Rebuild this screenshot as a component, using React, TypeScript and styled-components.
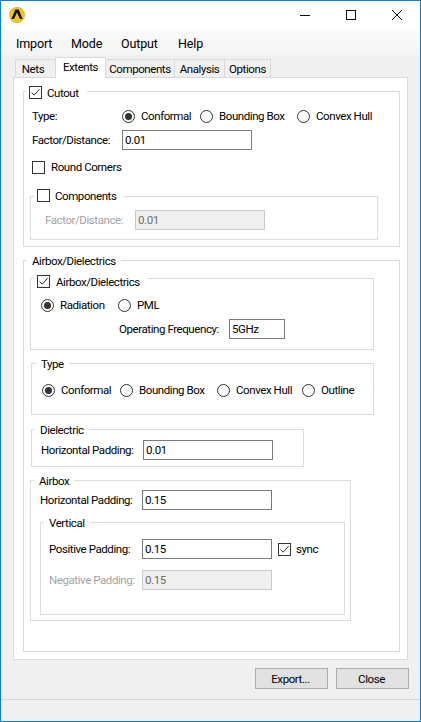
import React from "react";
import styled, { createGlobalStyle } from "styled-components";

const Global = createGlobalStyle`
  html, body { margin: 0; padding: 0; background: #f0f0f0; }
  * { box-sizing: border-box; }
  body { font-family: Roboto, "Liberation Sans", sans-serif; font-size: 11.5px; letter-spacing: -0.42px; color: #000; }
`;

const Window = styled.div`
  width: 421px;
  height: 722px;
  border: 1px solid #0f7fd8;
  background: #f0f0f0;
  display: flex;
  flex-direction: column;
  overflow: hidden;
`;
const TitleBar = styled.div`
  height: 30px;
  flex: none;
  background: #fff;
  display: flex;
  align-items: flex-start;
  padding: 6px 0 0 8px;
`;
const WindowControls = styled.div`
  margin: -6px 0 0 auto;
  display: flex;
`;
const ControlButton = styled.div`
  width: 46px;
  height: 28px;
  display: flex;
  align-items: center;
  justify-content: center;
`;
const MenuBar = styled.div`
  height: 24px;
  flex: none;
  background: linear-gradient(#fafafa, #f4f4f4);
  display: flex;
  align-items: center;
  padding-left: 15px;
`;
const MenuItem = styled.span<{ $w: number }>`
  width: ${(p) => p.$w}px;
  font-size: 12.5px;
  letter-spacing: -0.15px;
`;
const TabStrip = styled.div`
  height: 22px;
  flex: none;
  display: flex;
  align-items: flex-end;
  padding-left: 15px;
  position: relative;
  z-index: 1;
`;
const Tab = styled.div<{ $w: number; $active?: boolean; $pr?: number }>`
  width: ${(p) => p.$w}px;
  height: ${(p) => (p.$active ? 21 : 18)}px;
  margin-bottom: ${(p) => (p.$active ? -1 : 0)}px;
  background: ${(p) => (p.$active ? "#fff" : "#f0f0f0")};
  border: 1px solid #d9d9d9;
  border-bottom: none;
  margin-left: -1px;
  display: flex;
  align-items: center;
  justify-content: center;
  padding-bottom: ${(p) => (p.$active ? 2 : 0)}px;
  padding-right: ${(p) => p.$pr ?? 0}px;
  position: relative;
  z-index: ${(p) => (p.$active ? 2 : 1)};
`;
const Pane = styled.div`
  margin-left: 12px;
  width: 395px;
  height: 583px;
  flex: none;
  background: #fff;
  border: 1px solid #d9d9d9;
  padding-left: 9px;
`;
const Group = styled.div<{ $x?: number; $y: number; $w: number; $h: number }>`
  position: relative;
  margin-left: ${(p) => p.$x ?? 0}px;
  margin-top: ${(p) => p.$y}px;
  width: ${(p) => p.$w}px;
  height: ${(p) => p.$h}px;
  border: 1px solid #dcdcdc;
  flex: none;
`;
const Legend = styled.div<{ $x: number; $top?: number; $check?: boolean; $gap?: number }>`
  position: absolute;
  left: ${(p) => p.$x}px;
  top: ${(p) => p.$top ?? -8}px;
  height: 15px;
  padding: ${(p) => (p.$check ? "0 8px 0 3px" : "0 5px")};
  background: #fff;
  display: flex;
  align-items: center;
  gap: ${(p) => p.$gap ?? 5}px;
  white-space: nowrap;
`;
const Row = styled.div<{ $x: number; $y: number }>`
  display: flex;
  align-items: center;
  height: 20px;
  margin-left: ${(p) => p.$x}px;
  margin-top: ${(p) => p.$y}px;
  white-space: nowrap;
`;
const Label = styled.span<{ $w?: number; $disabled?: boolean }>`
  width: ${(p) => (p.$w ? `${p.$w}px` : "auto")};
  flex: none;
  color: ${(p) => (p.$disabled ? "#a3a3a3" : "#000")};
`;
const Field = styled.input<{ $w?: number }>`
  width: ${(p) => p.$w ?? 130}px;
  height: 20px;
  flex: none;
  border: 1px solid #7a7a7a;
  background: #fff;
  padding: 0 2px 1px;
  margin: 0;
  font: inherit;
  letter-spacing: inherit;
  color: #000;
  outline: none;
  &:disabled {
    background: #f0f0f0;
    border-color: #c9c9c9;
    color: #6d6d6d;
  }
`;
const RadioOption = styled.div<{ $w?: number }>`
  width: ${(p) => (p.$w ? `${p.$w}px` : "auto")};
  flex: none;
  display: flex;
  align-items: center;
  gap: 6px;
`;
const RadioCircle = styled.span<{ $on?: boolean }>`
  width: 13px;
  height: 13px;
  flex: none;
  border: 1px solid #333;
  border-radius: 50%;
  background: #fff;
  display: flex;
  align-items: center;
  justify-content: center;
  &::after {
    content: "";
    width: 7px;
    height: 7px;
    border-radius: 50%;
    background: ${(p) => (p.$on ? "#333" : "transparent")};
  }
`;
const CheckSquare = styled.span`
  width: 13px;
  height: 13px;
  flex: none;
  border: 1px solid #333;
  background: #fff;
  display: flex;
  align-items: center;
  justify-content: center;
`;
const CheckOption = styled.div<{ $gap?: number; $x?: number }>`
  display: flex;
  align-items: center;
  gap: ${(p) => p.$gap ?? 6}px;
  margin-left: ${(p) => p.$x ?? 0}px;
`;
const Footer = styled.div`
  height: 39px;
  flex: none;
  display: flex;
  justify-content: flex-end;
  align-items: flex-start;
  gap: 8px;
  padding: 8px 11px 0 0;
`;
const Button = styled.button`
  width: 73px;
  height: 21px;
  margin: 0;
  padding: 0 2px 0 0;
  border: 1px solid #adadad;
  background: #e1e1e1;
  font: inherit;
  letter-spacing: inherit;
  color: #000;
`;
const StatusBar = styled.div`
  flex: 1;
  border-top: 1px solid #d7d7d7;
`;

const Radio = ({ label, on, w }: { label: string; on?: boolean; w?: number }) => (
  <RadioOption $w={w}>
    <RadioCircle $on={on} />
    <span>{label}</span>
  </RadioOption>
);

const Box = ({ on }: { on?: boolean }) => (
  <CheckSquare>
    {on && (
      <svg width="11" height="11" viewBox="0 0 11 11">
        <path d="M1.5 5.5 L4.2 8.2 L9.6 2.2" fill="none" stroke="#333" strokeWidth="1" />
      </svg>
    )}
  </CheckSquare>
);

const Logo = () => (
  <svg width="16" height="16" viewBox="0 0 16 16">
    <circle cx="8" cy="8" r="7.7" fill="#f2c521" stroke="#b99a1c" strokeWidth="0.5" />
    <path d="M2.4 12 L6.3 2.6 H9.7 L13.6 12 H10.9 L8 5.6 L5.1 12 Z" fill="#111" />
  </svg>
);

const App = () => (
  <Window>
    <Global />
    <TitleBar>
      <Logo />
      <WindowControls>
        <ControlButton>
          <svg width="10" height="10" viewBox="0 0 10 10">
            <path d="M0 5.5 H10" stroke="#111" />
          </svg>
        </ControlButton>
        <ControlButton>
          <svg width="10" height="10" viewBox="0 0 10 10">
            <rect x="0.5" y="0.5" width="9" height="9" fill="none" stroke="#111" />
          </svg>
        </ControlButton>
        <ControlButton>
          <svg width="10" height="10" viewBox="0 0 10 10">
            <path d="M0 0 L10 10 M10 0 L0 10" stroke="#111" />
          </svg>
        </ControlButton>
      </WindowControls>
    </TitleBar>
    <MenuBar>
      <MenuItem $w={55}>Import</MenuItem>
      <MenuItem $w={50}>Mode</MenuItem>
      <MenuItem $w={57}>Output</MenuItem>
      <MenuItem $w={40}>Help</MenuItem>
    </MenuBar>
    <TabStrip>
      <Tab $w={41} $pr={5}>Nets</Tab>
      <Tab $w={51} $active>Extents</Tab>
      <Tab $w={70}>Components</Tab>
      <Tab $w={51}>Analysis</Tab>
      <Tab $w={47}>Options</Tab>
    </TabStrip>
    <Pane>
      <Group $y={13} $w={377} $h={156}>
        <Legend $x={2} $top={-7} $check>
          <Box on />
          <span>Cutout</span>
        </Legend>
        <Row $x={8} $y={14}>
          <Label $w={90}>Type:</Label>
          <Radio label="Conformal" on w={78} />
          <Radio label="Bounding Box" w={97} />
          <Radio label="Convex Hull" />
        </Row>
        <Row $x={8} $y={4}>
          <Label $w={90}>Factor/Distance:</Label>
          <Field defaultValue="0.01" />
        </Row>
        <Row $x={8} $y={7}>
          <CheckOption>
            <Box />
            <span>Round Corners</span>
          </CheckOption>
        </Row>
        <Group $x={6} $y={19} $w={348} $h={44}>
          <Legend $x={3} $top={-9} $check>
            <Box />
            <span>Components</span>
          </Legend>
          <Row $x={14} $y={13}>
            <Label $w={90} $disabled>Factor/Distance:</Label>
            <Field disabled defaultValue="0.01" />
          </Row>
        </Group>
      </Group>
      <Group $y={13} $w={377} $h={392}>
        <Legend $x={3}>
          <span>Airbox/Dielectrics</span>
        </Legend>
        <Group $x={6} $y={17} $w={344} $h={72}>
          <Legend $x={3} $top={-5} $check $gap={6}>
            <Box on />
            <span>Airbox/Dielectrics</span>
          </Legend>
          <Row $x={10} $y={16}>
            <Radio label="Radiation" on w={77} />
            <Radio label="PML" />
          </Row>
          <Row $x={88} $y={4}>
            <Label $w={110}>Operating Frequency:</Label>
            <Field $w={56} defaultValue="5GHz" />
          </Row>
        </Group>
        <Group $x={7} $y={13} $w={343} $h={52}>
          <Legend $x={4}>
            <span>Type</span>
          </Legend>
          <Row $x={10} $y={16}>
            <Radio label="Conformal" on w={78} />
            <Radio label="Bounding Box" w={97} />
            <Radio label="Convex Hull" w={85} />
            <Radio label="Outline" />
          </Row>
        </Group>
        <Group $x={7} $y={14} $w={273} $h={38}>
          <Legend $x={3}>
            <span>Dielectric</span>
          </Legend>
          <Row $x={9} $y={10}>
            <Label $w={102}>Horizontal Padding:</Label>
            <Field defaultValue="0.01" />
          </Row>
        </Group>
        <Group $x={6} $y={13} $w={321} $h={141}>
          <Legend $x={3}>
            <span>Airbox</span>
          </Legend>
          <Row $x={9} $y={9}>
            <Label $w={102}>Horizontal Padding:</Label>
            <Field defaultValue="0.15" />
          </Row>
          <Group $x={9} $y={12} $w={305} $h={93}>
            <Legend $x={3}>
              <span>Vertical</span>
            </Legend>
            <Row $x={8} $y={16}>
              <Label $w={93}>Positive Padding:</Label>
              <Field defaultValue="0.15" />
              <CheckOption $gap={5} $x={6}>
                <Box on />
                <span>sync</span>
              </CheckOption>
            </Row>
            <Row $x={8} $y={11}>
              <Label $w={93} $disabled>Negative Padding:</Label>
              <Field disabled defaultValue="0.15" />
            </Row>
          </Group>
        </Group>
      </Group>
    </Pane>
    <Footer>
      <Button>Export...</Button>
      <Button>Close</Button>
    </Footer>
    <StatusBar />
  </Window>
);

export default App;
